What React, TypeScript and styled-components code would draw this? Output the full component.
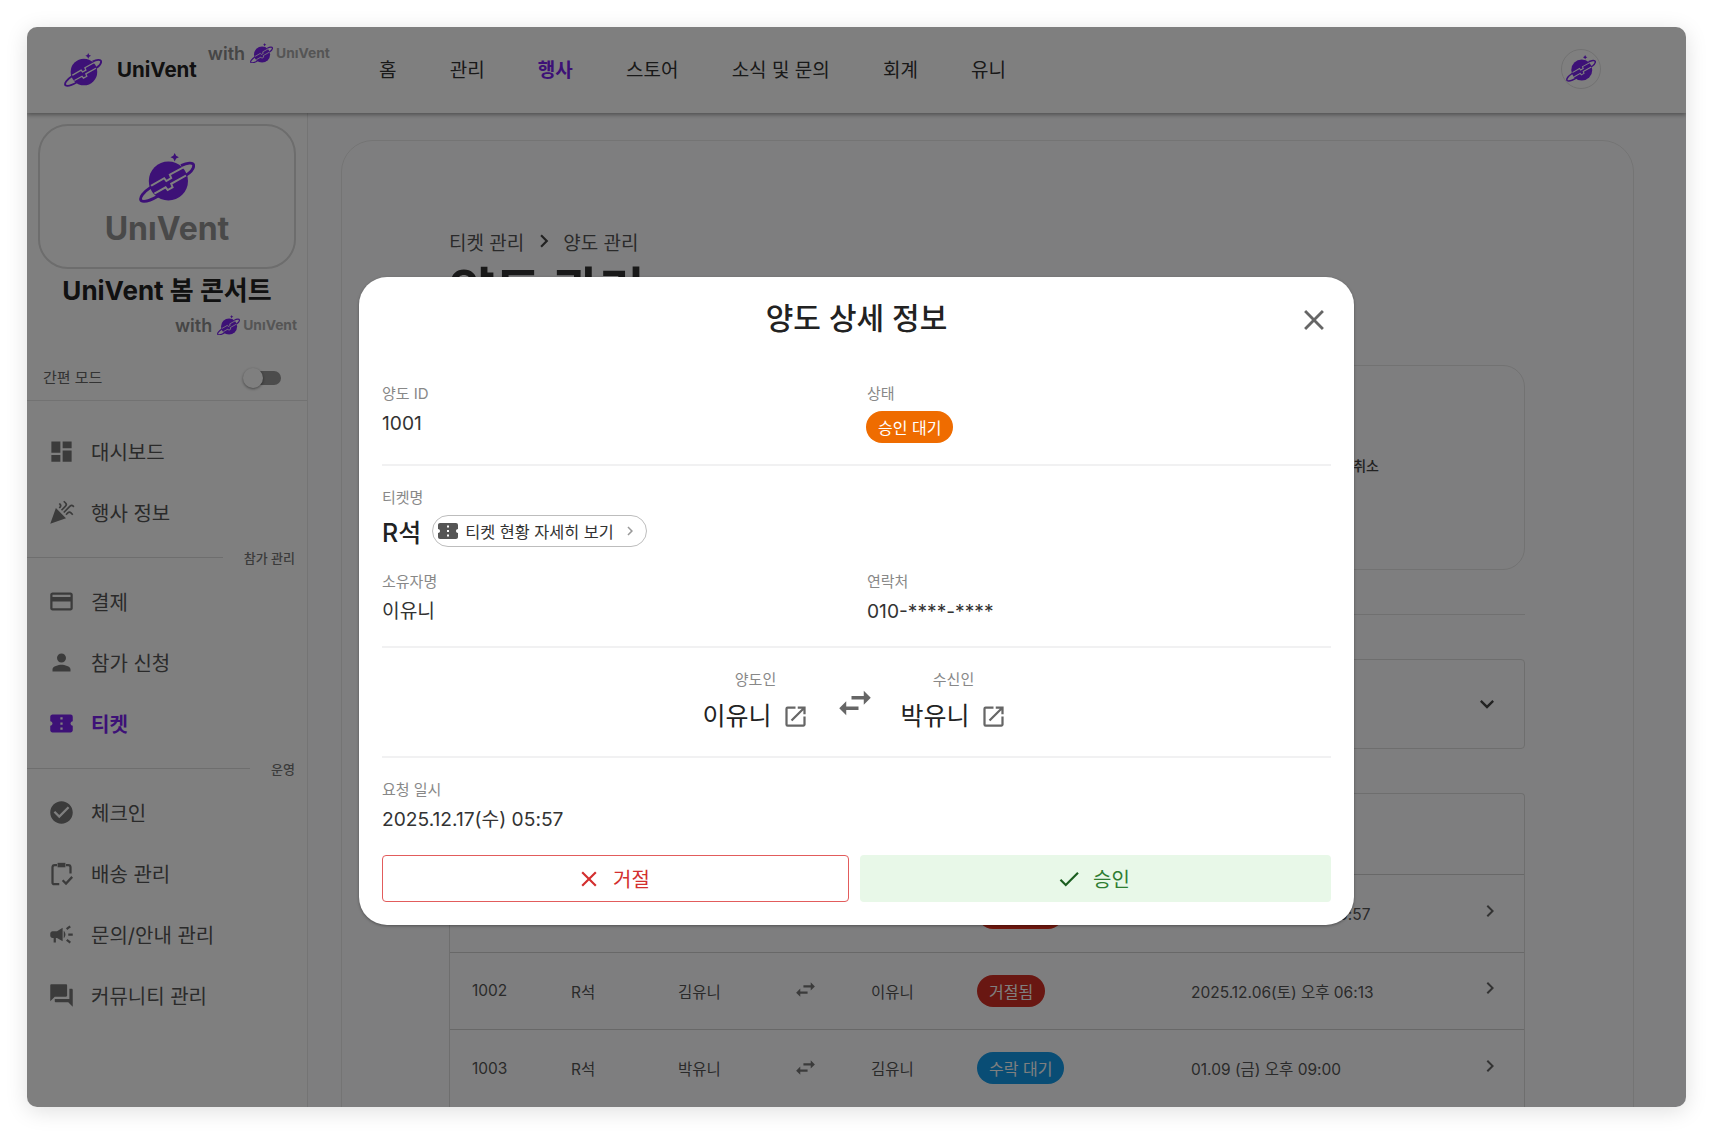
import React from 'react';
import styled, { createGlobalStyle } from 'styled-components';
import {
  MdDashboard, MdCelebration, MdOutlineCreditCard, MdPerson, MdConfirmationNumber,
  MdCheckCircle, MdCampaign, MdForum, MdClose, MdOpenInNew, MdSwapHoriz, MdCheck,
  MdChevronRight, MdKeyboardArrowDown,
} from 'react-icons/md';

const PURPLE = '#7a22ee';

const GlobalStyle = createGlobalStyle`
  html, body {
    margin: 0;
    background: #fff;
    font-family: Inter, "Noto Sans CJK KR", sans-serif;
  }
  * { box-sizing: border-box; }
`;

const Page = styled.div`
  width: 1713px;
  height: 1134px;
  padding: 27px;
  overflow: hidden;
`;

const Win = styled.div`
  position: relative;
  width: 1659px;
  height: 1080px;
  border-radius: 10px;
  overflow: hidden;
  background: #fff;
  display: flex;
  flex-direction: column;
  box-shadow: 0 4px 22px rgba(0, 0, 0, 0.13);
`;

/* header */
const Header = styled.header`
  position: relative;
  z-index: 1;
  flex: none;
  height: 86px;
  display: flex;
  align-items: center;
  padding: 0 0 0 37px;
  background: #fff;
  box-shadow: 0 2px 4px rgba(0, 0, 0, 0.35);
`;

const LogoSvg = styled.svg<{ $w: number }>`
  width: ${({ $w }) => $w}px;
  flex: none;
  display: block;
`;

const Brand = styled.div`
  display: flex;
  align-items: center;
  width: 315px;
  height: 100%;
`;

const BrandName = styled.span`
  margin-left: 15px;
  padding-bottom: 2px;
  font-size: 20.5px;
  font-weight: 700;
  color: #222;
`;

const WithMark = styled.div`
  display: flex;
  align-items: center;
  gap: 5px;
  color: #8c8c8c;
  font-size: 18px;
  font-weight: 600;
`;

const WithSmall = styled.span`
  font-size: 13.8px;
  font-weight: 700;
  color: #aaa;
  margin-left: -2px;
`;

const BrandWith = styled(WithMark)`
  margin: -34px 0 0 11px;
`;

const Nav = styled.nav`
  display: flex;
  gap: 53.2px;
  flex: 1;
  margin-top: -4px;
`;

const NavItem = styled.span<{ $active?: boolean }>`
  font-size: 19px;
  font-weight: ${({ $active }) => ($active ? 700 : 400)};
  color: ${({ $active }) => ($active ? PURPLE : '#333')};
`;

const Avatar = styled.div`
  width: 40px;
  height: 40px;
  margin: -3px 85px 0 0;
  border-radius: 50%;
  border: 1px solid #e2e2e2;
  display: flex;
  align-items: center;
  justify-content: center;
`;

const Body = styled.div`
  flex: 1;
  min-height: 0;
  display: flex;
`;

/* sidebar */
const Sidebar = styled.aside`
  flex: none;
  width: 281px;
  border-right: 1px solid #e8e8e8;
`;

const SideTop = styled.div`
  padding: 11px 0 0 11px;
`;

const LogoBox = styled.div`
  width: 258px;
  height: 145px;
  border: 2px solid #dadada;
  border-radius: 30px;
  display: flex;
  flex-direction: column;
  align-items: center;
  padding-top: 27px;
`;

const LogoWord = styled.span`
  margin-top: 6px;
  font-size: 32px;
  line-height: 40px;
  font-weight: 700;
  color: #929292;
`;

const EventName = styled.div`
  width: 258px;
  margin-top: 4px;
  text-align: center;
  font-size: 26px;
  line-height: 36px;
  font-weight: 700;
  color: #222;
`;

const SideWith = styled(WithMark)`
  justify-content: flex-end;
  width: 259px;
  height: 34px;
  margin-top: -1px;
`;

const ModeRow = styled.div`
  height: 59px;
  padding: 25px 26px 0 16px;
  display: flex;
  justify-content: space-between;
  align-items: flex-start;
  border-bottom: 1px solid #e4e4e4;
  font-size: 15px;
  line-height: 22px;
  color: #666;
`;

const Toggle = styled.div`
  position: relative;
  width: 38px;
  height: 14px;
  margin-top: 4px;
  display: flex;
  justify-content: flex-end;
`;

const ToggleTrack = styled.span`
  width: 34px;
  height: 14px;
  border-radius: 7px;
  background: #989898;
`;

const ToggleThumb = styled.span`
  position: absolute;
  left: 0;
  top: -3px;
  width: 20px;
  height: 20px;
  border-radius: 50%;
  background: #fff;
  box-shadow: 0 1px 3px rgba(0, 0, 0, 0.45);
`;

const Menu = styled.nav`
  padding-top: 20px;
`;

const MenuItem = styled.div<{ $active?: boolean }>`
  height: 61px;
  display: flex;
  align-items: center;
  gap: 16px;
  padding-left: 21px;
  font-size: 20px;
  font-weight: ${({ $active }) => ($active ? 700 : 400)};
  color: ${({ $active }) => ($active ? PURPLE : '#555')};
  svg {
    flex: none;
    width: 27px;
    height: 27px;
    color: ${({ $active }) => ($active ? PURPLE : '#777')};
  }
`;

const GroupRow = styled.div`
  height: 28px;
  display: flex;
  align-items: center;
  gap: 21px;
  padding-right: 12px;
  font-size: 13px;
  font-weight: 500;
  color: #777;
`;

const GroupLine = styled.span`
  flex: 1;
  height: 1px;
  background: #dcdcdc;
`;

/* page content under the dialog */
const Main = styled.main`
  flex: 1;
  min-width: 0;
  padding: 27px 52px 0 33px;
  background: #fdfdff;
`;

const Card = styled.section`
  height: 1100px;
  border: 1px solid #e8e8e8;
  border-radius: 32px;
  padding: 86px 108px 0 107px;
`;

const Crumbs = styled.div`
  display: flex;
  align-items: center;
  gap: 6.5px;
  height: 28px;
  font-size: 19px;
  color: #555;
  svg { width: 26px; height: 26px; color: #444; }
`;

const PageTitle = styled.h1`
  margin: 1px 0 0;
  height: 70px;
  font-size: 50px;
  line-height: 70px;
  font-weight: 700;
  color: #333;
`;

const Summary = styled.div`
  margin-top: 39px;
  height: 205px;
  border: 1px solid #e4e4e4;
  border-radius: 22px;
  display: flex;
  justify-content: flex-end;
  align-items: center;
  padding: 0 145px 5px 0;
  font-size: 14px;
  font-weight: 500;
  color: #444;
`;

const Rule = styled.hr`
  margin: 44px 0 0;
  border: 0;
  height: 1px;
  background: #e0e0e0;
`;

const Dropdown = styled.div`
  margin-top: 44px;
  height: 90px;
  border: 1px solid #dcdcdc;
  border-radius: 4px;
  display: flex;
  justify-content: flex-end;
  align-items: center;
  padding-right: 23px;
  svg { width: 28px; height: 28px; color: #444; }
`;

const Table = styled.div`
  margin-top: 44px;
  border: 1px solid #dcdcdc;
  border-bottom: 0;
  border-radius: 4px 4px 0 0;
`;

const TableHead = styled.div`
  height: 80px;
`;

const Row = styled.div`
  height: 77.6px;
  display: grid;
  grid-template-columns: 99px 107px 115px 78px 106px 214px 1fr 24px;
  align-items: center;
  padding-left: 22px;
  padding-right: 22px;
  border-top: 1px solid #d0d0d0;
  font-size: 15.5px;
  color: #555;
`;

const RowIcon = styled.span`
  display: flex;
  margin-top: -2px;
  color: #777;
  svg { width: 25px; height: 25px; }
`;

const RowArrow = styled.span`
  display: flex;
  justify-content: flex-end;
  margin-top: -5px;
  color: #666;
  svg { width: 24px; height: 24px; }
`;

const Chip = styled.span<{ $bg: string }>`
  display: inline-flex;
  align-items: center;
  justify-self: start;
  height: 32px;
  padding: 0 12px;
  border-radius: 16px;
  background: ${({ $bg }) => $bg};
  color: #fff;
  font-size: 16px;
`;

/* dialog */
const Overlay = styled.div`
  position: absolute;
  inset: 0;
  z-index: 2;
  background: rgba(0, 0, 0, 0.5);
  display: flex;
  justify-content: center;
  align-items: flex-start;
  padding-top: 250px;
`;

const Dialog = styled.div`
  position: relative;
  width: 995px;
  height: 648px;
  padding: 23px 23px;
  background: #fff;
  border-radius: 28px;
  box-shadow: 0 1px 3px rgba(0, 0, 0, 0.35);
`;

const DialogTitle = styled.h2`
  margin: 0;
  height: 84px;
  text-align: center;
  font-size: 30px;
  line-height: 36px;
  font-weight: 500;
  color: #222;
`;

const CloseBtn = styled.span`
  position: absolute;
  top: 26px;
  right: 23px;
  display: flex;
  color: #666;
  svg { width: 34px; height: 34px; }
`;

const Grid = styled.div`
  display: grid;
  grid-template-columns: 485px 1fr;
`;

const Label = styled.div`
  font-size: 15px;
  line-height: 20px;
  color: #888;
`;

const Value = styled.div`
  margin-top: 5px;
  font-size: 19.2px;
  line-height: 28px;
  color: #333;
`;

const StatusSlot = styled.div`
  margin-top: 7px;
  margin-left: -1px;
  display: flex;
`;

const Divider = styled.hr<{ $top: number; $bottom: number }>`
  margin: ${({ $top, $bottom }) => `${$top}px 0 ${$bottom}px`};
  border: 0;
  height: 2px;
  background: #f1f1f2;
`;

const TicketRow = styled.div`
  margin-top: 7px;
  display: flex;
  align-items: center;
  gap: 11px;
  height: 32px;
  margin-bottom: 25px;
`;

const TicketName = styled.span`
  font-size: 25px;
  font-weight: 500;
  color: #222;
`;

const TicketLink = styled.span`
  display: inline-flex;
  align-items: center;
  height: 32px;
  padding: 0 7px 0 3px;
  border: 1px solid #bdbdbd;
  border-radius: 16px;
  font-size: 16.3px;
  color: #333;
  svg:first-child { width: 24px; height: 24px; color: #555; margin-right: 5px; }
  svg:last-child { width: 18px; height: 18px; color: #999; margin-left: 7px; }
`;

const Transfer = styled.div`
  height: 58px;
  padding-right: 4px;
  display: flex;
  justify-content: center;
  align-items: center;
  gap: 25px;
`;

const Party = styled.div`
  display: flex;
  flex-direction: column;
  align-items: center;
`;

const PartyName = styled.div`
  margin-top: 12px;
  display: flex;
  align-items: center;
  gap: 10px;
  font-size: 25px;
  line-height: 28px;
  color: #222;
  svg { width: 27px; height: 27px; color: #666; }
`;

const SwapIcon = styled.span`
  display: flex;
  margin-top: 6px;
  color: #666;
  svg { width: 42px; height: 42px; }
`;

const Actions = styled.div`
  margin-top: 22px;
  display: grid;
  grid-template-columns: 467fr 471fr;
  gap: 11px;
`;

const ActionBtn = styled.button<{ $kind: 'reject' | 'approve' }>`
  height: 47px;
  padding: 0 5px 0 0;
  display: flex;
  align-items: center;
  justify-content: center;
  gap: 11px;
  font: inherit;
  font-size: 20px;
  border-radius: 4px;
  border: ${({ $kind }) => ($kind === 'reject' ? '1.5px solid #e25c5c' : '0')};
  background: ${({ $kind }) => ($kind === 'reject' ? '#fff' : '#e8f8e8')};
  color: ${({ $kind }) => ($kind === 'reject' ? '#d32f2f' : '#2e7d32')};
  svg {
    width: 26px;
    height: 26px;
    color: ${({ $kind }) => ($kind === 'reject' ? '#d32f2f' : '#1b5e20')};
  }
`;

function Planet({ width }: { width: number }) {
  return (
    <LogoSvg $w={width} viewBox="0 0 40 36">
      <path d="M25.5 0l1 2 2 1-2 1-1 2-1-2-2-1 2-1z" fill={PURPLE} />
      <circle cx="21" cy="20" r="14" fill={PURPLE} />
      <g stroke="#fff" strokeWidth="1.4" fill="none">
        <path d="M8.5 23.5L18 18l1.5 2 3.5-2-1-2.5L33 9.5" />
        <path d="M11 29l8-4.5 1.5 2 3.5-2-1-2.5 12.5-7" />
      </g>
      <g stroke={PURPLE} strokeWidth="2" fill="none">
        <path d="M9 24C3 28 0 32 1.5 34c2 1.5 7.5-.5 12.5-3.5" />
        <path d="M30 9c4.5-2 8.5-2.5 9-.5.5 2.5-2.5 5.5-5.5 7.5" />
      </g>
    </LogoSvg>
  );
}

function DeliveryIcon() {
  return (
    <svg viewBox="0 0 24 24" fill="none" stroke="currentColor" strokeWidth="2">
      <path d="M8 4.500H6a2 2 0 0 0-2 2V20a1.500 1.500 0 0 0 1.500 1.500H10" />
      <path d="M16 4.500h2a2 2 0 0 1 2 2V12" />
      <path d="M8.500 2.500h7v4h-7z" fill="currentColor" stroke="none" />
      <path d="M13 18l3 3 5.500-6" />
    </svg>
  );
}

function With() {
  return (
    <>
      <span>with</span>
      <Planet width={23} />
      <WithSmall>UnıVent</WithSmall>
    </>
  );
}

const firstMenu = [
  { icon: <MdDashboard />, label: '대시보드' },
  { icon: <MdCelebration />, label: '행사 정보' },
];
const secondMenu = [
  { icon: <MdOutlineCreditCard />, label: '결제' },
  { icon: <MdPerson />, label: '참가 신청' },
  { icon: <MdConfirmationNumber />, label: '티켓', active: true },
];
const thirdMenu = [
  { icon: <MdCheckCircle />, label: '체크인' },
  { icon: <DeliveryIcon />, label: '배송 관리' },
  { icon: <MdCampaign />, label: '문의/안내 관리' },
  { icon: <MdForum />, label: '커뮤니티 관리' },
];

const rows = [
  { id: '1001', from: '이유니', to: '박유니', status: '승인 대기', color: '#e0301c', date: '2025.12.17(수) 오후 05:57' },
  { id: '1002', from: '김유니', to: '이유니', status: '거절됨', color: '#d32f24', date: '2025.12.06(토) 오후 06:13' },
  { id: '1003', from: '박유니', to: '김유니', status: '수락 대기', color: '#129bea', date: '01.09 (금) 오후 09:00' },
];

const navItems = ['홈', '관리', '행사', '스토어', '소식 및 문의', '회계', '유니'];

function renderMenu(items: { icon: React.ReactNode; label: string; active?: boolean }[]) {
  return items.map((item) => (
    <MenuItem key={item.label} $active={item.active}>
      {item.icon}
      {item.label}
    </MenuItem>
  ));
}

export default function App(): JSX.Element {
  return (
    <Page>
      <GlobalStyle />
      <Win>
        <Header>
          <Brand>
            <Planet width={38} />
            <BrandName>UniVent</BrandName>
            <BrandWith><With /></BrandWith>
          </Brand>
          <Nav>
            {navItems.map((name) => (
              <NavItem key={name} $active={name === '행사'}>{name}</NavItem>
            ))}
          </Nav>
          <Avatar><Planet width={30} /></Avatar>
        </Header>
        <Body>
          <Sidebar>
            <SideTop>
              <LogoBox>
                <Planet width={56} />
                <LogoWord>UnıVent</LogoWord>
              </LogoBox>
              <EventName>UniVent 봄 콘서트</EventName>
              <SideWith><With /></SideWith>
            </SideTop>
            <ModeRow>
              <span>간편 모드</span>
              <Toggle>
                <ToggleTrack />
                <ToggleThumb />
              </Toggle>
            </ModeRow>
            <Menu>
              {renderMenu(firstMenu)}
              <GroupRow><GroupLine />참가 관리</GroupRow>
              {renderMenu(secondMenu)}
              <GroupRow><GroupLine />운영</GroupRow>
              {renderMenu(thirdMenu)}
            </Menu>
          </Sidebar>
          <Main>
            <Card>
              <Crumbs>
                <span>티켓 관리</span>
                <MdChevronRight />
                <span>양도 관리</span>
              </Crumbs>
              <PageTitle>양도 관리</PageTitle>
              <Summary>양도 취소</Summary>
              <Rule />
              <Dropdown><MdKeyboardArrowDown /></Dropdown>
              <Table>
                <TableHead />
                {rows.map((row) => (
                  <Row key={row.id}>
                    <span>{row.id}</span>
                    <span>R석</span>
                    <span>{row.from}</span>
                    <RowIcon><MdSwapHoriz /></RowIcon>
                    <span>{row.to}</span>
                    <Chip $bg={row.color}>{row.status}</Chip>
                    <span>{row.date}</span>
                    <RowArrow><MdChevronRight /></RowArrow>
                  </Row>
                ))}
              </Table>
            </Card>
          </Main>
        </Body>
        <Overlay>
          <Dialog>
            <DialogTitle>양도 상세 정보</DialogTitle>
            <CloseBtn><MdClose /></CloseBtn>
            <Grid>
              <div>
                <Label>양도 ID</Label>
                <Value>1001</Value>
              </div>
              <div>
                <Label>상태</Label>
                <StatusSlot><Chip $bg="#ef6c00">승인 대기</Chip></StatusSlot>
              </div>
            </Grid>
            <Divider $top={21} $bottom={22} />
            <Label>티켓명</Label>
            <TicketRow>
              <TicketName>R석</TicketName>
              <TicketLink>
                <MdConfirmationNumber />
                티켓 현황 자세히 보기
                <MdChevronRight />
              </TicketLink>
            </TicketRow>
            <Grid>
              <div>
                <Label>소유자명</Label>
                <Value>이유니</Value>
              </div>
              <div>
                <Label>연락처</Label>
                <Value>010-****-****</Value>
              </div>
            </Grid>
            <Divider $top={21} $bottom={23} />
            <Transfer>
              <Party>
                <Label>양도인</Label>
                <PartyName>이유니 <MdOpenInNew /></PartyName>
              </Party>
              <SwapIcon><MdSwapHoriz /></SwapIcon>
              <Party>
                <Label>수신인</Label>
                <PartyName>박유니 <MdOpenInNew /></PartyName>
              </Party>
            </Transfer>
            <Divider $top={27} $bottom={22} />
            <Label>요청 일시</Label>
            <Value>2025.12.17(수) 05:57</Value>
            <Actions>
              <ActionBtn $kind="reject"><MdClose />거절</ActionBtn>
              <ActionBtn $kind="approve"><MdCheck />승인</ActionBtn>
            </Actions>
          </Dialog>
        </Overlay>
      </Win>
    </Page>
  );
}
